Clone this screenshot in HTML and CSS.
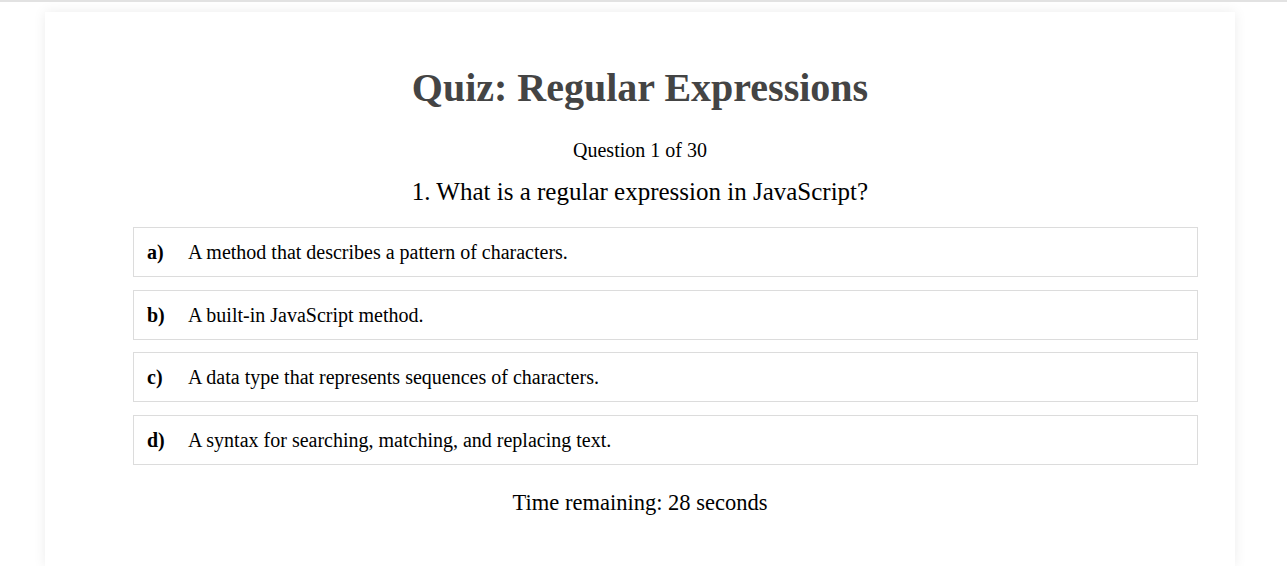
FILE: index.html
```html
<!DOCTYPE html>
<html lang="en">
<head>
<meta charset="utf-8">
<title>Quiz: Regular Expressions</title>
<link rel="stylesheet" href="styles.css">
</head>
<body>
<div class="topbar"></div>
<main class="card">
  <h1 class="title">Quiz: Regular Expressions</h1>
  <p class="counter">Question 1 of 30</p>
  <h2 class="question">1. What is a regular expression in JavaScript?</h2>
  <ul class="options">
    <li class="option"><span class="letter">a)</span><span class="text">A method that describes a pattern of characters.</span></li>
    <li class="option"><span class="letter">b)</span><span class="text">A built-in JavaScript method.</span></li>
    <li class="option"><span class="letter">c)</span><span class="text">A data type that represents sequences of characters.</span></li>
    <li class="option"><span class="letter">d)</span><span class="text">A syntax for searching, matching, and replacing text.</span></li>
  </ul>
  <p class="timer">Time remaining: 28 seconds</p>
</main>
</body>
</html>
```
FILE: styles.css
```css
html, body {
  margin: 0;
  padding: 0;
  background: #fff;
}
body {
  font-family: "Liberation Serif", "Times New Roman", serif;
  color: #000;
}
.topbar {
  height: 2px;
  background: #e2e2e2;
}
.card {
  width: 1190px;
  height: 554px;
  box-sizing: border-box;
  margin: 10px 0 0 45px;
  background: #fff;
  box-shadow: 0 0 12px rgba(0, 0, 0, 0.08);
  padding: 50px 37px 0 88px;
  display: flex;
  flex-direction: column;
}
.title {
  margin: 0 0 0 -51px;
  text-align: center;
  font-size: 40px;
  font-weight: bold;
  color: #444;
  line-height: 52px;
}
.counter {
  margin: 25px 0 0 -51px;
  text-align: center;
  font-size: 20px;
  line-height: 22px;
}
.question {
  margin: 17px 0 0 -51px;
  text-align: center;
  font-size: 25px;
  font-weight: normal;
  line-height: 28px;
}
.options {
  list-style: none;
  margin: 21px 0 0;
  padding: 0;
  display: flex;
  flex-direction: column;
  gap: 12.67px;
}
.option {
  border: 1px solid #dcdcdc;
  padding: 14px 13px;
  font-size: 20px;
  line-height: 20px;
  display: flex;
}
.letter {
  font-weight: bold;
  width: 41px;
}
.timer {
  margin: 24px 0 0 -51px;
  text-align: center;
  font-size: 22.5px;
  line-height: 28px;
}
```
